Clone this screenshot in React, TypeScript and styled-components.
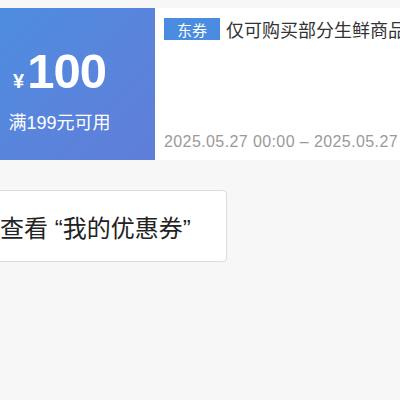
import styled, { createGlobalStyle } from 'styled-components';

const GlobalStyle = createGlobalStyle`
  html, body {
    margin: 0;
    padding: 0;
    background: #f7f7f7;
    font-family: "Liberation Sans", "Noto Sans CJK SC", sans-serif;
    overflow: hidden;
  }
`;

const Page = styled.div`
  width: 400px;
  height: 400px;
  overflow: hidden;
  background: #f7f7f7;
`;

const Stage = styled.div`
  margin-left: -36px;
  padding-top: 8px;
  display: flex;
  flex-direction: column;
  align-items: flex-start;
  gap: 30px;
`;

const Coupon = styled.div`
  display: flex;
  height: 152px;
  width: 520px;
  background: #fff;
`;

const Value = styled.div`
  width: 191px;
  flex: none;
  display: flex;
  flex-direction: column;
  align-items: center;
  justify-content: center;
  color: #fff;
  background: linear-gradient(135deg, #4a8fe0 0%, #5a84dc 60%, #5f7ed8 100%);
`;

const Amount = styled.div`
  display: flex;
  align-items: baseline;
  font-weight: bold;
  margin-top: 8px;
`;

const Yen = styled.span`
  font-size: 20px;
  margin-right: 3px;
`;

const Num = styled.span`
  font-size: 49px;
  letter-spacing: -1px;
`;

const Cond = styled.div`
  font-size: 18px;
  margin-top: 9px;
`;

const Info = styled.div`
  flex: 1;
  display: flex;
  flex-direction: column;
  justify-content: space-between;
  padding: 8px 9px 9px;
`;

const TitleRow = styled.div`
  display: flex;
  align-items: center;
  gap: 6px;
  white-space: nowrap;
`;

const Tag = styled.span`
  display: inline-flex;
  align-items: center;
  justify-content: center;
  width: 56px;
  height: 22px;
  background: #4a8ce0;
  color: #fff;
  font-size: 15px;
`;

const Title = styled.span`
  font-size: 18px;
  color: #333;
`;

const Dates = styled.div`
  font-size: 16px;
  letter-spacing: 0.4px;
  color: #9a9a9a;
  white-space: nowrap;
`;

const ViewButton = styled.div`
  height: 72px;
  box-sizing: border-box;
  padding: 0 35px;
  display: flex;
  align-items: center;
  background: #fff;
  border: 1px solid #dcdcdc;
  border-radius: 4px;
  font-size: 24px;
  color: #222;
  white-space: nowrap;
`;

export default function App() {
  return (
    <Page>
      <GlobalStyle />
      <Stage>
        <Coupon>
          <Value>
            <Amount>
              <Yen>¥</Yen>
              <Num>100</Num>
            </Amount>
            <Cond>满199元可用</Cond>
          </Value>
          <Info>
            <TitleRow>
              <Tag>东券</Tag>
              <Title>仅可购买部分生鲜商品</Title>
            </TitleRow>
            <Dates>2025.05.27 00:00 – 2025.05.27 23:59</Dates>
          </Info>
        </Coupon>
        <ViewButton>查看 “我的优惠券”</ViewButton>
      </Stage>
    </Page>
  );
}
